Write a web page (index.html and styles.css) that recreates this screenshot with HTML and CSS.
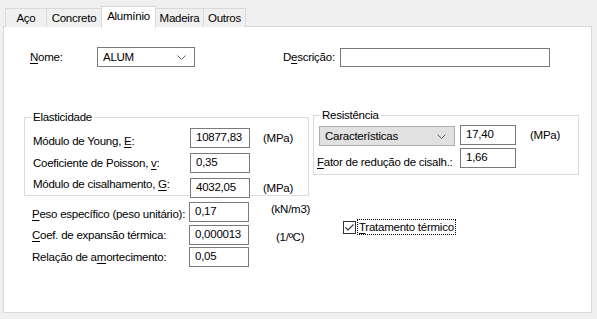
FILE: index.html
```html
<!DOCTYPE html>
<html lang="pt">
<head>
  <meta charset="UTF-8">
  <title>Materiais - Alumínio</title>
  <link rel="stylesheet" href="styles.css">
</head>
<body>

  <div class="abas">
    <div class="aba aba-aco">Aço</div>
    <div class="aba aba-concreto">Concreto</div>
    <div class="aba ativa">Alumínio</div>
    <div class="aba aba-madeira">Madeira</div>
    <div class="aba aba-outros">Outros</div>
  </div>

  <div class="painel">

    <div class="linha-topo">
      <span class="rotulo-nome"><u>N</u>ome:</span>
      <div class="combo combo-nome">
        <span>ALUM</span>
        <svg width="9" height="5" viewBox="0 0 9 5"><path d="M0.5 0.5 L4.5 4.5 L8.5 0.5" fill="none" stroke="#606060"/></svg>
      </div>
      <span class="rotulo-desc">D<u>e</u>scrição:</span>
      <div class="campo campo-desc"></div>
    </div>

    <div class="linha-grupos">
      <fieldset class="grupo grupo-elast">
        <legend>Elasticidade</legend>
        <div class="item item-e">
          <span class="rotulo">Módulo de Young, <u>E</u>:</span>
          <div class="campo">10877,83</div>
          <span class="unidade">(MPa)</span>
        </div>
        <div class="item item-v">
          <span class="rotulo">Coeficiente de Poisson, <u>v</u>:</span>
          <div class="campo">0,35</div>
        </div>
        <div class="item item-g">
          <span class="rotulo">Módulo de cisalhamento, <u>G</u>:</span>
          <div class="campo">4032,05</div>
          <span class="unidade">(MPa)</span>
        </div>
      </fieldset>

      <fieldset class="grupo grupo-resist">
        <legend>Resistência</legend>
        <div class="item-r">
          <div class="combo combo-carac">
            <span>Características</span>
            <svg width="9" height="5" viewBox="0 0 9 5"><path d="M0.5 0.5 L4.5 4.5 L8.5 0.5" fill="none" stroke="#606060"/></svg>
          </div>
          <div class="campo campo-r">17,40</div>
          <span class="unidade">(MPa)</span>
        </div>
        <div class="item-r item-fator">
          <span class="rotulo-fator"><u>F</u>ator de redução de cisalh.:</span>
          <div class="campo campo-r">1,66</div>
        </div>
      </fieldset>
    </div>

    <div class="linha-baixo">
      <div class="props">
        <div class="item item-peso">
          <span class="rotulo"><u>P</u>eso específico (peso unitário):</span>
          <div class="campo">0,17</div>
          <span class="unidade unidade-kn">(kN/m3)</span>
        </div>
        <div class="item item-coef">
          <span class="rotulo"><u>C</u>oef. de expansão térmica:</span>
          <div class="campo">0,000013</div>
          <span class="unidade unidade-c">(1/ºC)</span>
        </div>
        <div class="item item-amort">
          <span class="rotulo">Relação de a<u>m</u>ortecimento:</span>
          <div class="campo">0,05</div>
        </div>
      </div>

      <div class="opcao">
        <span class="caixa">
          <svg width="11" height="11" viewBox="0 0 11 11"><path d="M1.5 5.5 L4 8 L9.5 2.5" fill="none" stroke="#333" stroke-width="1.1"/></svg>
        </span>
        <span class="opcao-texto"><u>T</u>ratamento térmico</span>
      </div>
    </div>

  </div>

</body>
</html>
```

FILE: styles.css
```css
:root {
  --fundo: #f0f0f0;
  --borda-aba: #d9d9d9;
  --borda-grupo: #dcdcdc;
  --borda-campo: #7a7a7a;
  --texto: #000;
}

* {
  box-sizing: border-box;
}

body {
  margin: 0;
  background: var(--fundo);
  color: var(--texto);
  font-family: "Liberation Sans", Arial, sans-serif;
  font-size: 11.5px;
  letter-spacing: -0.25px;
  width: 597px;
  height: 319px;
  overflow: hidden;
  white-space: nowrap;
}

u {
  text-decoration-thickness: 1px;
  text-underline-offset: 2px;
}

/* abas */
.abas {
  display: flex;
  align-items: flex-end;
  height: 27px;
  padding-left: 5px;
}

.aba {
  flex: none;
  height: 19px;
  border: 1px solid var(--borda-aba);
  border-bottom: none;
  margin-left: -1px;
  line-height: 18px;
  text-align: center;
  background: var(--fundo);
}

.aba-aco { width: 42px; margin-left: 0; }
.aba-concreto { width: 56px; }
.aba-madeira { width: 49px; }
.aba-outros { width: 43px; }

.aba.ativa {
  width: 55px;
  height: 22px;
  background: #fff;
  position: relative;
  z-index: 1;
  margin-bottom: -1px;
  padding-top: 1px;
  line-height: 16px;
}

/* painel */
.painel {
  margin-left: 3px;
  width: 589px;
  height: 287px;
  background: #fff;
  border: 1px solid var(--borda-aba);
  margin-top: -1px;
}

.linha-topo {
  display: flex;
  align-items: center;
  margin-top: 20px;
  height: 20px;
}

.linha-topo > *,
.item > *,
.item-r > * {
  flex: none;
}

.rotulo-nome {
  margin-left: 26px;
  width: 67px;
}

.combo {
  display: flex;
  align-items: center;
  justify-content: space-between;
  height: 20px;
  border: 1px solid var(--borda-campo);
  padding: 0 8px 0 5px;
}

.combo-nome {
  width: 98px;
}

.rotulo-desc {
  margin-left: 88px;
  width: 57px;
}

.campo {
  height: 20px;
  border: 1px solid var(--borda-campo);
  padding: 0 5px;
  line-height: 17px;
  background: #fff;
}

.campo-desc {
  width: 210px;
  height: 19px;
}

/* grupos */
.linha-grupos {
  display: flex;
  align-items: flex-start;
  margin-top: 42px;
}

.grupo {
  margin: 0;
  padding: 0;
  border: 1px solid var(--borda-grupo);
}

.grupo legend {
  margin-left: 6px;
  padding: 0 2px;
  line-height: 16px;
}

.grupo-elast {
  margin-left: 20px;
  width: 285px;
  height: 87px;
}

.grupo-resist {
  margin-left: 4px;
  margin-top: -2px;
  width: 266px;
  height: 68px;
}

.item {
  display: flex;
  align-items: center;
  height: 25px;
}

.item .rotulo {
  margin-left: 8px;
  width: 157px;
}

.item .campo {
  width: 60px;
}

.unidade {
  margin-left: 13px;
}

.item-e .rotulo {
  padding-top: 7px;
}

.item-g .rotulo {
  padding-bottom: 8px;
}

.item-r {
  display: flex;
  align-items: center;
  height: 20px;
  margin-left: 5px;
}

.item-r:first-of-type {
  margin-top: 2px;
}

.combo-carac {
  width: 136px;
  background: #e1e1e1;
  border-color: #adadad;
  margin-top: 2px;
}

.campo-r {
  width: 56px;
  margin-left: 5px;
}

.item-r .unidade {
  margin-left: 14px;
}

.item-fator {
  margin-top: 3px;
  margin-left: 3px;
}

.rotulo-fator {
  width: 138px;
  padding-top: 8px;
}

/* parte de baixo */
.linha-baixo {
  display: flex;
  align-items: flex-start;
  margin-top: 5px;
}

.props {
  margin-left: 20px;
  width: 300px;
}

.props .item {
  height: 22.5px;
}

.props .item .rotulo {
  width: 157px;
}

.item-peso .rotulo {
  padding-top: 3px;
}

.unidade-kn {
  margin-left: 22px;
  padding-bottom: 6px;
}

.unidade-c {
  margin-left: 27px;
  padding-top: 4px;
}

.opcao {
  display: flex;
  align-items: center;
  margin-left: 19px;
  margin-top: 19px;
}

.caixa {
  width: 13px;
  height: 13px;
  border: 1px solid #333;
  display: flex;
  align-items: center;
  justify-content: center;
}

.opcao-texto {
  margin-left: 2px;
  outline: 1px dotted #000;
  padding: 0 1px;
  line-height: 14px;
}
```
